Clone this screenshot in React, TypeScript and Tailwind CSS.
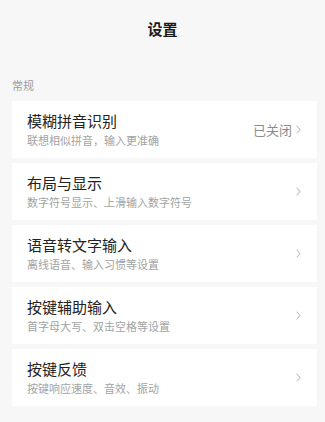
const items = [
  { title: "模糊拼音识别", desc: "联想相似拼音，输入更准确", value: "已关闭" },
  { title: "布局与显示", desc: "数字符号显示、上滑输入数字符号" },
  { title: "语音转文字输入", desc: "离线语音、输入习惯等设置" },
  { title: "按键辅助输入", desc: "首字母大写、双击空格等设置" },
  { title: "按键反馈", desc: "按键响应速度、音效、振动" },
];

function Chevron() {
  return (
    <svg width="5" height="9" viewBox="0 0 5 9" fill="none" className="ml-[4px]">
      <path d="M1 1l3 3.5-3 3.5" stroke="#bdbdbd" strokeWidth="1.1" strokeLinecap="round" strokeLinejoin="round" />
    </svg>
  );
}

export default function App() {
  return (
    <div
      className="min-h-[422px] w-full bg-[#f7f7f7]"
      style={{ fontFamily: '"Noto Sans CJK SC", "Noto Sans", sans-serif' }}
    >
      <div className="flex h-[57px] items-center justify-center">
        <h1 className="text-[15px] font-bold leading-5 text-[#1a1a1a]">设置</h1>
      </div>
      <p className="mt-[20px] pl-3 text-[11px] leading-4 text-[#9a9a9a]">常规</p>
      <div className="mt-[8px] ml-3 mr-2 flex flex-col gap-[5px]">
        {items.map((it) => (
          <div key={it.title} className="flex items-center bg-white py-[10px] pl-[15px] pr-[16px]">
            <div className="flex flex-1 flex-col gap-[1px]">
              <span className="text-[15px] leading-5 text-[#222]">{it.title}</span>
              <span className="text-[11px] leading-4 text-[#a3a3a3]">{it.desc}</span>
            </div>
            <div className="flex items-center">
              {it.value && <span className="text-[13px] leading-5 text-[#8c8c8c]">{it.value}</span>}
              <Chevron />
            </div>
          </div>
        ))}
      </div>
    </div>
  );
}
